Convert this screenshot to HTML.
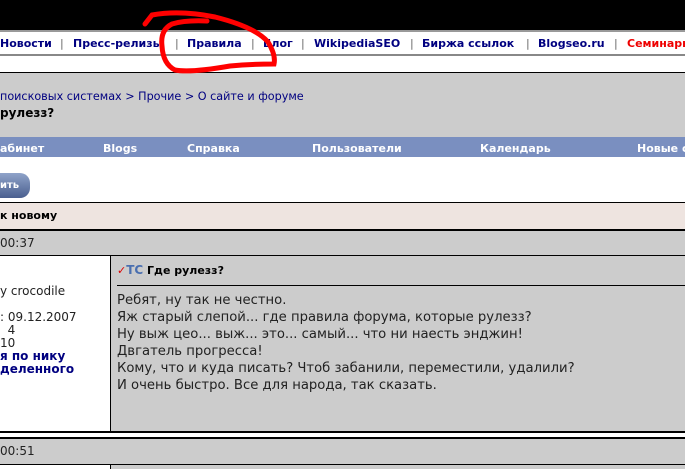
<!DOCTYPE html>
<html><head><meta charset="utf-8"><style>
body{margin:0;width:685px;height:469px;overflow:hidden;position:relative;background:#fff;font-family:"DejaVu Sans","Liberation Sans",sans-serif;}
.a{position:absolute;white-space:nowrap}
.nav{font-weight:bold;font-size:11px;color:#000080;top:37px}
.sep{color:#666;font-weight:normal}
.bl{color:#fff;font-weight:bold;font-size:11px;top:142px}
.t{font-size:12px;color:#222;font-family:"DejaVu Sans",sans-serif}
</style></head><body>
<div class="a" style="left:0;top:0;width:685px;height:30px;background:#000"></div>
<div class="a" style="left:0;top:30px;width:685px;height:2px;background:#999"></div>
<span class="a nav" style="left:0">Новости</span>
<span class="a nav sep" style="left:60px">|</span>
<span class="a nav" style="left:73px">Пресс-релизы</span>
<span class="a nav sep" style="left:175px">|</span>
<span class="a nav" style="left:187px">Правила</span>
<span class="a nav sep" style="left:251px">|</span>
<span class="a nav" style="left:263px">Блог</span>
<span class="a nav sep" style="left:301px">|</span>
<span class="a nav" style="left:314px">WikipediaSEO</span>
<span class="a nav sep" style="left:410px">|</span>
<span class="a nav" style="left:422px">Биржа ссылок</span>
<span class="a nav sep" style="left:526px">|</span>
<span class="a nav" style="left:538px">Blogseo.ru</span>
<span class="a nav sep" style="left:614px">|</span>
<span class="a nav" style="left:627px;color:#e00">Семинары</span>
<div class="a" style="left:0;top:54px;width:685px;height:2px;background:#888"></div>
<div class="a" style="left:0;top:72px;width:685px;height:65px;background:#ccc;border-top:1px solid #000"></div>
<span class="a" style="left:0;top:90px;font-size:11.2px;color:#000080">поисковых системах &gt; Прочие &gt; О сайте и форуме</span>
<span class="a" style="left:0;top:106px;font-size:12px;font-weight:bold;color:#000">рулезз?</span>
<div class="a" style="left:0;top:137px;width:685px;height:20px;background:#7a8fc0"></div>
<span class="a bl" style="left:0">абинет</span>
<span class="a bl" style="left:103px">Blogs</span>
<span class="a bl" style="left:187px">Справка</span>
<span class="a bl" style="left:312px">Пользователи</span>
<span class="a bl" style="left:480px">Календарь</span>
<span class="a bl" style="left:637px">Новые с</span>
<div class="a" style="left:-20px;top:173px;width:50px;height:25px;border-radius:10px;background:linear-gradient(#8fa3c9,#4a5f8f);"></div>
<span class="a" style="left:0;top:180px;font-size:10px;font-weight:bold;color:#fff">ить</span>
<div class="a" style="left:0;top:202px;width:685px;height:26px;background:#eee4e0;border-top:1px solid #000;border-bottom:2px solid #000"></div>
<span class="a" style="left:0;top:209px;font-size:11px;font-weight:bold">к новому</span>
<div class="a" style="left:0;top:231px;width:685px;height:24px;background:#ccc;border-bottom:1px solid #000"></div>
<span class="a t" style="left:0;top:236px">00:37</span>
<div class="a" style="left:0;top:256px;width:110px;height:175px;background:#fff;border-right:1px solid #000"></div>
<div class="a" style="left:111px;top:256px;width:574px;height:175px;background:#ccc"></div>
<span class="a" style="left:117px;top:263px;font-size:11px;font-weight:bold"><span style="color:#d00">✓</span><span style="color:#4a6fb0;font-size:12px">TC</span> Где рулезз?</span>
<div class="a" style="left:117px;top:285px;width:568px;height:1px;background:#000"></div>
<div class="a t" style="left:117px;top:292px;line-height:17px;font-size:13.2px">Ребят, ну так не честно.<br>Яж старый слепой... где правила форума, которые рулезз?<br>Ну выж цео... выж... это... самый... что ни наесть энджин!<br>Двгатель прогресса!<br>Кому, что и куда писать? Чтоб забанили, переместили, удалили?<br>И очень быстро. Все для народа, так сказать.</div>
<div class="a t" style="left:0;top:285px;line-height:13px;font-size:12px">y crocodile<br><br>: 09.12.2007<br>&nbsp;&nbsp;4<br>10<br><b style="color:#000080">я по нику<br>деленного</b></div>
<div class="a" style="left:0;top:431px;width:685px;height:2px;background:#000"></div>
<div class="a" style="left:0;top:437px;width:685px;height:25px;background:#ccc;border-top:2px solid #000;border-bottom:1px solid #000"></div>
<span class="a t" style="left:0;top:444px">00:51</span>
<div class="a" style="left:0;top:465px;width:110px;height:4px;background:#fff;border-right:1px solid #000"></div>
<div class="a" style="left:111px;top:465px;width:574px;height:4px;background:#ccc"></div>
<svg class="a" style="left:0;top:0" width="685" height="469"><path d="M145 24 L152 15 Q180 10 215 17 Q255 27 268 42 Q276 55 274 64 Q250 64 230 66 Q190 73 175 70 Q163 64 162 46 Q160 30 172 24 Q185 20 207 21" fill="none" stroke="#f00" stroke-width="5" stroke-linecap="round"/></svg>
</body></html>
